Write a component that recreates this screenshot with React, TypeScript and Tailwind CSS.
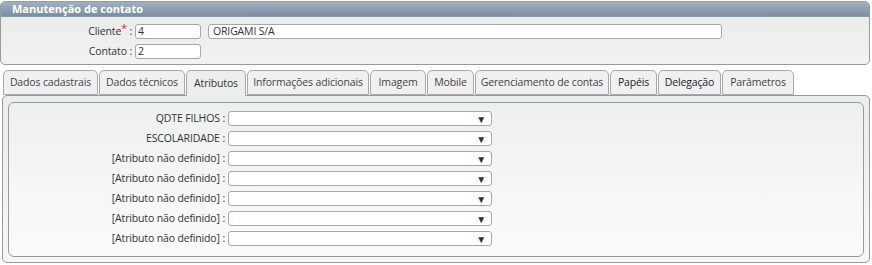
import React from "react";

const tabs = [
  { label: "Dados cadastrais", w: 95 },
  { label: "Dados técnicos", w: 86 },
  { label: "Atributos", w: 60, active: true },
  { label: "Informações adicionais", w: 122 },
  { label: "Imagem", w: 56 },
  { label: "Mobile", w: 47 },
  { label: "Gerenciamento de contas", w: 134 },
  { label: "Papéis", w: 47, dark: true },
  { label: "Delegação", w: 63, dark: true },
  { label: "Parâmetros", w: 72 },
];

const rows = [
  "QDTE FILHOS",
  "ESCOLARIDADE",
  "[Atributo não definido]",
  "[Atributo não definido]",
  "[Atributo não definido]",
  "[Atributo não definido]",
  "[Atributo não definido]",
];

function Select() {
  return (
    <div className="w-[264px] h-[15px] bg-white border border-[#a8a8a8] rounded-[3px] flex items-center justify-end pr-[5px]">
      <span className="text-[10px] leading-none text-[#333]">▼</span>
    </div>
  );
}

export default function App() {
  return (
    <div className="w-[872px] h-[265px] bg-white text-[10.5px] tracking-[-0.15px] text-[#333] font-['Open_Sans',sans-serif] pt-[1px]">
      {/* top panel */}
      <div className="w-[870px] h-[64px] border border-[#9a9a9a] rounded-[5px] overflow-hidden bg-gradient-to-b from-[#e8ebeb] to-[#f1f2f2]">
        <div className="h-[15px] bg-gradient-to-b from-[#a0b1c1] to-[#7b8ea2] text-white font-bold leading-[14px] pl-[11px] text-[11px] tracking-normal border-b border-[#8a9aab]">
          Manutenção de contato
        </div>
        <div className="flex flex-col gap-[6px] pt-[7px]">
          <div className="flex items-center h-[14px]">
            <div className="w-[134px] text-right pr-[3px] leading-[14px]">
              Cliente<span className="text-[#e0301e] relative top-[-3px]">*</span> :
            </div>
            <div className="w-[66px] h-[15px] bg-white border border-[#a8a8a8] rounded-[3px] leading-[13px] pl-[2px]">4</div>
            <div className="w-[514px] h-[15px] ml-[7px] bg-white border border-[#a8a8a8] rounded-[3px] leading-[13px] pl-[4px]">ORIGAMI S/A</div>
          </div>
          <div className="flex items-center h-[14px]">
            <div className="w-[134px] text-right pr-[3px] leading-[14px]">Contato :</div>
            <div className="w-[66px] h-[15px] bg-white border border-[#a8a8a8] rounded-[3px] leading-[13px] pl-[2px]">2</div>
          </div>
        </div>
      </div>

      {/* tabs */}
      <div className="flex gap-[1px] pl-[3px] mt-[5px] h-[26px] items-end relative z-10">
        {tabs.map((t) => (
          <div
            key={t.label}
            style={{ width: t.w }}
            className={
              t.active
                ? "h-[26px] border border-[#a8a8a8] border-b-0 rounded-t-[5px] bg-[#eceeee] text-center leading-[24px] text-[#333]"
                : "h-[25px] mb-[1px] border border-[#a8a8a8] rounded-t-[5px] bg-[#f0f0f0] text-center leading-[23px] " +
                  (t.dark ? "text-[#222]" : "text-[#444]")
            }
          >
            {t.label}
          </div>
        ))}
      </div>

      {/* tab panel */}
      <div className="ml-[2px] w-[868px] h-[168px] -mt-[1px] border border-[#9a9a9a] rounded-[5px] bg-gradient-to-b from-[#eaeded] to-[#f6f7f7] pt-[6px] px-[5px]">
        <div className="h-[155px] border border-[#9a9a9a] rounded-[6px] bg-gradient-to-b from-[#eef0f0] to-[#fafafa] pt-[8px] flex flex-col gap-[5px]">
          {rows.map((r, i) => (
            <div key={i} className="flex items-center h-[15px]">
              <div className="w-[219px] text-right pr-[3px] leading-[15px] text-[#333]">{r} :</div>
              <Select />
            </div>
          ))}
        </div>
      </div>
    </div>
  );
}
